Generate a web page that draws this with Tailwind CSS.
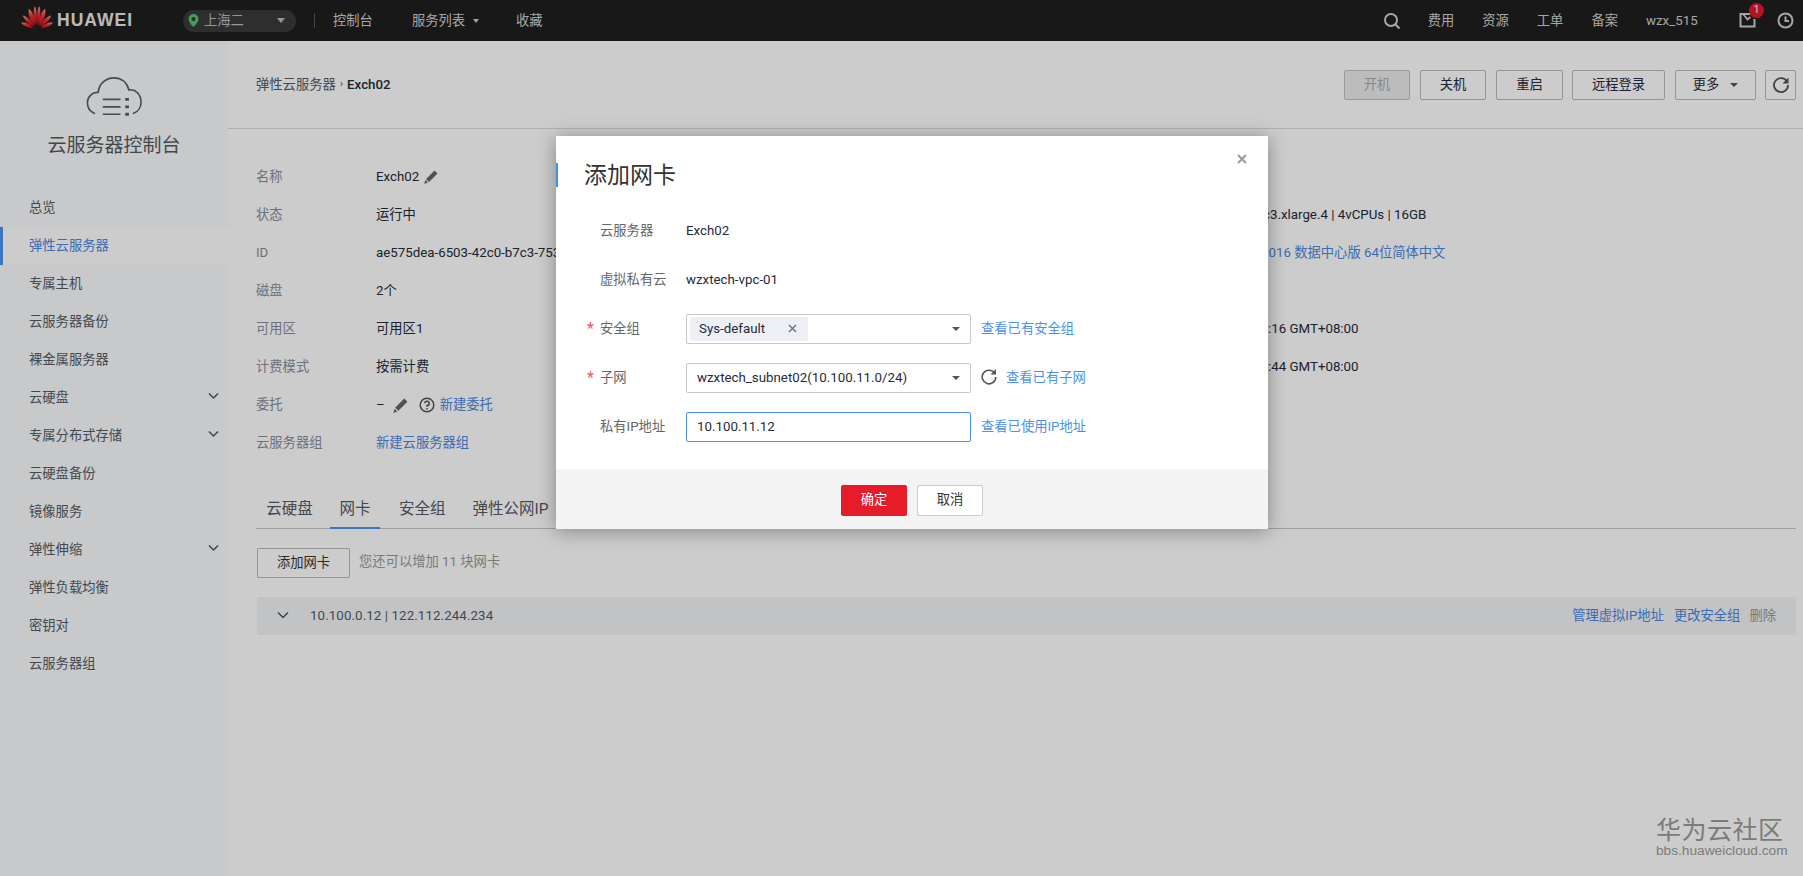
<!DOCTYPE html>
<html lang="zh">
<head>
<meta charset="utf-8">
<title>添加网卡</title>
<script src="https://cdn.jsdelivr.net/npm/@tailwindcss/browser@4"></script>
</head>
<body class="m-0 h-[876px] w-[1803px] overflow-hidden bg-white text-[13.300px] text-[#252b3a] font-['Roboto','Noto_Sans_CJK_SC',sans-serif]">
<div class="relative h-[876px] w-[1803px] overflow-hidden">

  <!-- top nav -->
  <header class="flex h-[41px] items-center bg-[#1f1f1f] text-[13.300px] text-[#d0d0d0]">
    <svg class="ml-[20px] h-[25px] w-[34px] -translate-y-[3px]" viewBox="0 0 33 24">
      <defs><linearGradient id="pet" x1="0" y1="0" x2="0" y2="1"><stop offset="0" stop-color="#f59a86"/><stop offset=".45" stop-color="#ee2a30"/><stop offset="1" stop-color="#c4101a"/></linearGradient></defs>
      <g fill="url(#pet)">
        <path d="M15.800 20C13 14 12.500 6 14.200 1 16 2.500 17 10 15.800 20Z"/>
        <path d="M17.200 20C20 14 20.500 6 18.800 1 17 2.500 16 10 17.200 20Z"/>
        <path d="M14.400 20.500C9.500 15.500 7.500 9 8.600 3.600 11.600 5.500 14.800 12 14.400 20.500Z"/>
        <path d="M18.600 20.500C23.500 15.500 25.500 9 24.400 3.600 21.400 5.500 18.200 12 18.600 20.500Z"/>
        <path d="M13.200 21C8.500 18.500 4 14.500 2.800 10 7 11 11.500 15 13.200 21Z"/>
        <path d="M19.800 21C24.500 18.500 29 14.500 30.200 10 26 11 21.500 15 19.800 21Z"/>
        <path d="M12.500 22C8 22.500 3.500 20.500 1 17 5 16.500 10 18.500 12.500 22Z"/>
        <path d="M20.500 22C25 22.500 29.500 20.500 32 17 28 16.500 23 18.500 20.500 22Z"/>
      </g>
    </svg>
    <span class="ml-[3px] w-[76px] whitespace-nowrap font-['Liberation_Sans',sans-serif] text-[17.500px] font-bold tracking-[1px] text-[#e8e8e8]">HUAWEI</span>
    <div class="ml-[50px] flex h-[22px] w-[113px] items-center rounded-full bg-[#3a3a3a] pl-[3px]">
      <svg class="h-[15px] w-[15px]" viewBox="0 0 16 16"><path fill-rule="evenodd" fill="#55c36f" d="M8 1a5.300 5.300 0 0 0-5.300 5.300C2.700 10 8 15 8 15s5.300-5 5.300-8.700A5.300 5.300 0 0 0 8 1Zm0 3.300a2.200 2.200 0 1 1 0 4.400 2.200 2.200 0 0 1 0-4.400Z"/></svg>
      <span class="ml-[3px] w-[73px] text-[#bcbcbc]">上海二</span>
      <span class="h-0 w-0 border-x-[4px] border-t-[5px] border-x-transparent border-t-[#bbb]"></span>
    </div>
    <span class="ml-[18px] h-[15px] w-px bg-[#555]"></span>
    <span class="ml-[18px]">控制台</span>
    <span class="ml-[39px]">服务列表</span>
    <span class="ml-[8px] h-0 w-0 border-x-[3.500px] border-t-[4.500px] border-x-transparent border-t-[#ccc]"></span>
    <span class="ml-[37px]">收藏</span>
    <div class="ml-auto flex items-center">
      <svg class="h-[18px] w-[18px]" viewBox="0 0 18 18" fill="none" stroke="#d0d0d0" stroke-width="2"><circle cx="8" cy="8" r="6"/><path d="m12.500 12.500 4 4"/></svg>
      <span class="ml-[27px]">费用</span>
      <span class="ml-[28px]">资源</span>
      <span class="ml-[28px]">工单</span>
      <span class="ml-[28px]">备案</span>
      <span class="ml-[28px] w-[53px]">wzx_515</span>
      <div class="relative ml-[40px] h-[18px] w-[17px]">
        <svg class="h-[16px] w-[17px]" viewBox="0 0 17 16" fill="none" stroke="#d0d0d0" stroke-width="2"><path d="M11 2H1.500v12.500h14V7"/><path d="m4.500 2.500 4 5 3-2.500" stroke-width="1.800"/></svg>
        <span class="absolute -top-[9px] left-[10px] flex h-[15px] w-[15px] items-center justify-center rounded-full bg-[#e8162a] text-[11px] text-[#f2f2f2]">1</span>
      </div>
      <svg class="ml-[21px] mr-[9px] h-[17px] w-[17px]" viewBox="0 0 17 17" fill="none" stroke="#d0d0d0" stroke-width="2"><circle cx="8.500" cy="8.500" r="7"/><path d="M8.500 4.500v4.500h3.500"/></svg>
    </div>
  </header>

  <div class="flex h-[835px]">
    <!-- sidebar -->
    <aside class="w-[228px] shrink-0 bg-[#f9fcfd] text-[13.300px] text-[#555a64]">
      <div class="flex h-[146px] flex-col items-center pt-[35px]">
        <svg class="h-[42px] w-[60px]" viewBox="0 0 60 45" fill="none" stroke="#5c5f62" stroke-width="1.800" stroke-linecap="round"><path d="M9 40C4 38 1.500 33 1.500 28.500 1.500 22 7 17 13 17.500 14 8.500 21 2 30 2c8 0 14 5 16 13 7-1.500 13 5 13 13 0 5-3 10-8 12"/><path d="M18 25h19M18 33h19M18 41h19" stroke-linecap="butt"/><path d="M42 25h4M42 33h4M42 41h4" stroke-width="3" stroke-linecap="butt"/></svg>
        <div class="mt-[15px] text-[19px] leading-[26px] text-[#555a60]">云服务器控制台</div>
      </div>
      <nav class="flex flex-col pt-[2px]">
        <a class="flex h-[38px] items-center pl-[29px]">总览</a>
        <a class="flex h-[38px] items-center border-l-[3px] border-[#4b93f0] bg-white pl-[26px] text-[#4b87e0]">弹性云服务器</a>
        <a class="flex h-[38px] items-center pl-[29px]">专属主机</a>
        <a class="flex h-[38px] items-center pl-[29px]">云服务器备份</a>
        <a class="flex h-[38px] items-center pl-[29px]">裸金属服务器</a>
        <a class="flex h-[38px] items-center justify-between pl-[29px] pr-[9px]">云硬盘<svg class="mb-[4px] h-[8px] w-[11px]" viewBox="0 0 11 8" fill="none" stroke="#555" stroke-width="1.500"><path d="m1 1.500 4.500 4.500L10 1.500"/></svg></a>
        <a class="flex h-[38px] items-center justify-between pl-[29px] pr-[9px]">专属分布式存储<svg class="mb-[4px] h-[8px] w-[11px]" viewBox="0 0 11 8" fill="none" stroke="#555" stroke-width="1.500"><path d="m1 1.500 4.500 4.500L10 1.500"/></svg></a>
        <a class="flex h-[38px] items-center pl-[29px]">云硬盘备份</a>
        <a class="flex h-[38px] items-center pl-[29px]">镜像服务</a>
        <a class="flex h-[38px] items-center justify-between pl-[29px] pr-[9px]">弹性伸缩<svg class="mb-[4px] h-[8px] w-[11px]" viewBox="0 0 11 8" fill="none" stroke="#555" stroke-width="1.500"><path d="m1 1.500 4.500 4.500L10 1.500"/></svg></a>
        <a class="flex h-[38px] items-center pl-[29px]">弹性负载均衡</a>
        <a class="flex h-[38px] items-center pl-[29px]">密钥对</a>
        <a class="flex h-[38px] items-center pl-[29px]">云服务器组</a>
      </nav>
    </aside>

    <!-- main -->
    <main class="min-w-0 flex-1">
      <div class="flex h-[88px] items-center border-b border-[#dcdcdc] pt-[1px] pl-[28px] pr-[7px]">
        <div class="flex items-center text-[13.300px] text-[#555a64]">弹性云服务器<span class="mx-[4px] mb-[2px] text-[11px]">›</span><span class="font-medium text-[#252b3a]">Exch02</span></div>
        <div class="ml-auto flex items-center text-[13.300px]">
          <button class="flex h-[30px] w-[66px] items-center justify-center rounded-[2px] border border-[#c0c0c0] bg-[#ececec] text-[#aaa]">开机</button>
          <button class="ml-[10px] flex h-[30px] w-[66px] items-center justify-center rounded-[2px] border border-[#bbb] bg-white">关机</button>
          <button class="ml-[10px] flex h-[30px] w-[67px] items-center justify-center rounded-[2px] border border-[#bbb] bg-white">重启</button>
          <button class="ml-[9px] flex h-[30px] w-[93px] items-center justify-center rounded-[2px] border border-[#bbb] bg-white">远程登录</button>
          <button class="ml-[10px] flex h-[30px] w-[81px] items-center justify-center rounded-[2px] border border-[#bbb] bg-white">更多<span class="ml-[11px] h-0 w-0 border-x-[4px] border-t-[4.500px] border-x-transparent border-t-[#555]"></span></button>
          <button class="ml-[9px] flex h-[30px] w-[31px] items-center justify-center rounded-[2px] border border-[#bbb] bg-white"><svg class="h-[18px] w-[18px]" viewBox="0 0 18 18" fill="none" stroke="#555" stroke-width="1.800"><path d="M15 5.500A7 7 0 1 0 16 9"/><path fill="#555" stroke="none" d="M16.500 1.500v6h-6z"/></svg></button>
        </div>
      </div>

      <!-- details -->
      <div class="pl-[28px] pt-[29px]">
        <div class="flex h-[38px] items-center"><span class="w-[120px] text-[#8a8e99]">名称</span><span>Exch02</span><svg class="ml-[4px] h-[16px] w-[16px]" viewBox="0 0 16 16" fill="#666"><path d="M11.500 1.500 14.500 4.500 6 13 3 10zM2.400 11l2.600 2.600L1.200 15z"/></svg></div>
        <div class="flex h-[38px] items-center"><span class="w-[120px] text-[#8a8e99]">状态</span><span class="w-[887px]">运行中</span><span class="whitespace-nowrap">c3.xlarge.4 | 4vCPUs | 16GB</span></div>
        <div class="flex h-[38px] items-center"><span class="w-[120px] text-[#8a8e99]">ID</span><span class="w-[885px]">ae575dea-6503-42c0-b7c3-7530</span><span class="whitespace-nowrap text-[#4b87e0]">2016 数据中心版 64位简体中文</span></div>
        <div class="flex h-[38px] items-center"><span class="w-[120px] text-[#8a8e99]">磁盘</span><span>2个</span></div>
        <div class="flex h-[38px] items-center"><span class="w-[120px] text-[#8a8e99]">可用区</span><span class="w-[892px]">可用区1</span><span class="whitespace-nowrap">:16 GMT+08:00</span></div>
        <div class="flex h-[38px] items-center"><span class="w-[120px] text-[#8a8e99]">计费模式</span><span class="w-[892px]">按需计费</span><span class="whitespace-nowrap">:44 GMT+08:00</span></div>
        <div class="flex h-[38px] items-center"><span class="w-[120px] text-[#8a8e99]">委托</span><span>–</span><svg class="ml-[7px] h-[17px] w-[17px]" viewBox="0 0 16 16" fill="#666"><path d="M11.500 1.500 14.500 4.500 6 13 3 10zM2.400 11l2.600 2.600L1.200 15z"/></svg><svg class="ml-[10px] h-[16px] w-[16px]" viewBox="0 0 16 16" fill="none" stroke="#555" stroke-width="1.500"><circle cx="8" cy="8" r="6.800"/><path d="M5.800 6.300A2.200 2.200 0 1 1 8 8.600v1.200"/><path d="M8 11v1.500"/></svg><span class="ml-[5px] text-[#4b87e0]">新建委托</span></div>
        <div class="flex h-[38px] items-center"><span class="w-[120px] text-[#8a8e99]">云服务器组</span><span class="text-[#4b87e0]">新建云服务器组</span></div>
      </div>

      <!-- tabs -->
      <div class="ml-[28px] mr-[7px] mt-[30px] flex h-[37px] border-b border-[#c8c8c8] text-[15.500px] text-[#555a64]">
        <span class="flex w-[74px] justify-center pt-[6px] pr-[7px]">云硬盘</span>
        <span class="flex h-[37px] w-[50px] justify-center border-b-[2px] border-[#4b93f0] pt-[6px]">网卡</span>
        <span class="ml-[19px] pt-[6px]">安全组</span>
        <span class="ml-[27px] pt-[6px]">弹性公网IP</span>
      </div>

      <div class="ml-[29px] mt-[19px] flex items-center">
        <button class="flex h-[30px] w-[93px] items-center justify-center rounded-[1px] border border-[#bbb] bg-white text-[13.300px] text-[#333]">添加网卡</button>
        <span class="ml-[9px] text-[#999] -translate-y-[1px]">您还可以增加 11 块网卡</span>
      </div>

      <div class="ml-[29px] mr-[7px] mt-[19px] flex h-[38px] items-center bg-[#f2f4f7] pl-[20px] pr-[20px] text-[#555a64]">
        <svg class="h-[8px] w-[12px] -translate-y-px" viewBox="0 0 12 8" fill="none" stroke="#555" stroke-width="1.500"><path d="m1 1.500 5 5 5-5"/></svg>
        <span class="ml-[21px] tracking-[0.100px]">10.100.0.12 | 122.112.244.234</span>
        <span class="ml-auto text-[#4b87e0]">管理虚拟IP地址</span>
        <span class="ml-[10px] text-[#4b87e0]">更改安全组</span>
        <span class="ml-[9px] text-[#999]">删除</span>
      </div>
    </main>
  </div>

  <!-- dim layer over the page -->
  <div class="absolute inset-0 bg-black/20"></div>

  <!-- watermark -->
  <div class="absolute left-[1656px] top-[813px] flex flex-col items-start text-[#7b7b7b]">
    <span class="text-[25px] leading-[30px] tracking-[0.5px] font-['Noto_Sans_CJK_SC',sans-serif]">华为云社区</span>
    <span class="font-['Liberation_Sans',sans-serif] text-[13.700px] leading-[16px]">bbs.huaweicloud.com</span>
  </div>

  <!-- dialog -->
  <div class="absolute left-[556px] top-[136px] flex h-[393px] w-[712px] flex-col bg-white shadow-[0_2px_18px_rgba(0,0,0,0.35)]">
    <span class="absolute left-0 top-[27px] h-[24px] w-[2px] bg-[#3d8ff0]"></span>
    <svg class="absolute right-[21px] top-[18px] h-[10px] w-[10px]" viewBox="0 0 10 10" stroke="#9a9a9a" stroke-width="2"><path d="m1 1 8 8M9 1l-8 8"/></svg>
    <div class="flex h-[76px] items-start pl-[28px] pt-[23px] text-[23px] leading-[34px] text-[#333]">添加网卡</div>
    <div class="flex-1">
      <div class="flex h-[49px] items-center -mt-[6px]"><span class="ml-[44px] w-[86px] text-[#666]">云服务器</span><span>Exch02</span></div>
      <div class="flex h-[49px] items-center"><span class="ml-[44px] w-[86px] text-[#666]">虚拟私有云</span><span>wzxtech-vpc-01</span></div>
      <div class="flex h-[49px] items-center">
        <span class="ml-[31px] w-[13px] text-[16px] text-[#f2556a]">*</span><span class="w-[86px] text-[#666]">安全组</span>
        <div class="flex h-[30px] w-[285px] items-center rounded-[2px] border border-[#c8c8c8] pl-[3px] pr-[10px]">
          <div class="flex h-[24px] w-[118px] items-center rounded-[1px] bg-[#eef0f5] pl-[9px] pr-[11px]"><span>Sys-default</span><svg class="ml-auto h-[9px] w-[9px]" viewBox="0 0 9 9" stroke="#777" stroke-width="1.500"><path d="m1 1 7 7M8 1 1 8"/></svg></div>
          <span class="ml-auto h-0 w-0 border-x-[4px] border-t-[4.500px] border-x-transparent border-t-[#555]"></span>
        </div>
        <a class="ml-[10px] text-[#4b92ea]">查看已有安全组</a>
      </div>
      <div class="flex h-[49px] items-center">
        <span class="ml-[31px] w-[13px] text-[16px] text-[#f2556a]">*</span><span class="w-[86px] text-[#666]">子网</span>
        <div class="flex h-[30px] w-[285px] items-center rounded-[2px] border border-[#c8c8c8] pl-[10px] pr-[10px]">
          <span>wzxtech_subnet02(10.100.11.0/24)</span>
          <span class="ml-auto h-0 w-0 border-x-[4px] border-t-[4.500px] border-x-transparent border-t-[#555]"></span>
        </div>
        <svg class="ml-[10px] mb-[2px] h-[17px] w-[16px]" viewBox="0 0 16 16" fill="none" stroke="#555" stroke-width="1.600"><path d="M13.500 4.500A6.800 6.800 0 1 0 14.800 8.500"/><path fill="#555" stroke="none" d="M15 0.500v5.500H9.500z"/></svg>
        <a class="ml-[9px] text-[#4b92ea]">查看已有子网</a>
      </div>
      <div class="flex h-[49px] items-center">
        <span class="ml-[44px] w-[86px] text-[#666]">私有IP地址</span>
        <div class="flex h-[30px] w-[285px] items-center rounded-[2px] border border-[#4b92ea] pl-[10px]">10.100.11.12</div>
        <a class="ml-[10px] text-[#4b92ea]">查看已使用IP地址</a>
      </div>
    </div>
    <div class="flex h-[60px] items-center justify-center gap-[10px] bg-[#f4f4f4] pt-[2px]">
      <button class="h-[31px] w-[66px] rounded-[2px] bg-[#e61c2a] text-white">确定</button>
      <button class="h-[31px] w-[66px] rounded-[2px] border border-[#ccc] bg-white text-[#333]">取消</button>
    </div>
  </div>
</div>
</body>
</html>
